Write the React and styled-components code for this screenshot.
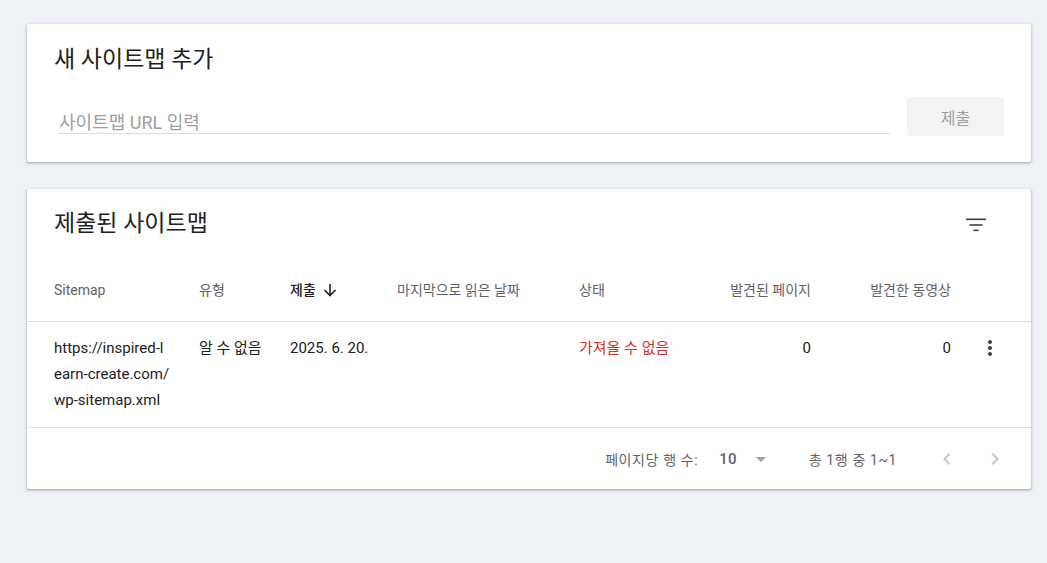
import React from 'react';
import styled, { createGlobalStyle } from 'styled-components';

const GlobalStyle = createGlobalStyle`
  html, body {
    margin: 0;
    padding: 0;
    background: #eef2f7;
    font-family: Roboto, 'Noto Sans CJK KR', sans-serif;
    color: #202124;
  }
`;

const Page = styled.div`
  padding: 24px 16px 40px 27px;
  width: 1004px;
  display: flex;
  flex-direction: column;
  gap: 27px;
`;

const Card = styled.section`
  background: #fff;
  border-radius: 2px;
  box-shadow: 0 1px 2px rgba(60, 64, 67, 0.3), 0 1px 3px 1px rgba(60, 64, 67, 0.15);
`;

const AddCard = styled(Card)`
  padding: 22px 27px 26px;
`;

const Title = styled.h2`
  margin: 0;
  font-size: 23px;
  line-height: 28px;
  font-weight: 400;
  color: #202124;
`;

const FormRow = styled.div`
  margin-top: 23px;
  display: flex;
  align-items: flex-start;
  gap: 17px;
`;

const UrlInput = styled.input`
  box-sizing: border-box;
  margin-left: 4px;
  width: 832px;
  height: 37px;
  padding: 14px 0 0 1px;
  border: none;
  border-bottom: 1px solid #dadce0;
  outline: none;
  font-family: inherit;
  font-size: 18px;
  line-height: 22px;
  color: #202124;
  &::placeholder {
    color: #9aa0a6;
  }
`;

const SubmitButton = styled.button`
  width: 97px;
  height: 39px;
  border: none;
  border-radius: 4px;
  background: #f3f3f3;
  color: #9e9e9e;
  font-family: inherit;
  font-size: 16px;
`;

const ListCard = styled(Card)`
  padding-top: 21px;
`;

const TitleRow = styled.div`
  display: flex;
  align-items: center;
  justify-content: space-between;
  padding: 0 42px 0 27px;
`;

const IconButton = styled.span`
  display: inline-flex;
  width: 24px;
  height: 24px;
  color: ${p => p.color || '#5f6368'};
`;

const columns = '145px 91px 107px 182px 92px 140px 140px 53px';

const HeadRow = styled.div`
  display: grid;
  grid-template-columns: ${columns};
  align-items: end;
  padding: 43px 27px 22px;
  border-bottom: 1px solid #dadce0;
`;

const HeadCell = styled.div`
  font-size: 14px;
  line-height: 18px;
  color: ${p => (p.active ? '#202124' : '#5f6368')};
  font-weight: ${p => (p.active ? 500 : 400)};
  display: flex;
  align-items: center;
  justify-content: ${p => (p.right ? 'flex-end' : 'flex-start')};
  gap: 7px;
`;

const DataRow = styled.div`
  display: grid;
  grid-template-columns: ${columns};
  align-items: start;
  padding: 13px 27px 14px;
  border-bottom: 1px solid #dadce0;
`;

const Cell = styled.div`
  font-size: 15px;
  line-height: 26px;
  color: ${p => p.color || '#202124'};
  text-align: ${p => (p.right ? 'right' : 'left')};
  padding-right: ${p => (p.wrap ? '29px' : '0')};
  word-break: ${p => (p.wrap ? 'break-all' : 'normal')};
  white-space: ${p => (p.wrap ? 'normal' : 'nowrap')};
`;

const MenuCell = styled.div`
  display: flex;
  justify-content: flex-end;
  padding-top: 1px;
  padding-right: 2px;
`;

const Footer = styled.div`
  height: 61px;
  display: flex;
  align-items: center;
  justify-content: flex-end;
  padding-right: 24px;
  font-size: 14px;
  letter-spacing: 0.6px;
  color: #5f6368;
`;

const RowsValue = styled.span`
  margin-left: 21px;
  font-size: 15px;
  font-weight: 500;
  letter-spacing: 0.3px;
  color: #5f6368;
`;

const DropIcon = styled.span`
  display: inline-flex;
  margin-left: 12px;
  color: #9aa0a6;
`;

const RangeText = styled.span`
  margin-left: 36px;
`;

const Pager = styled.div`
  display: flex;
  gap: 24px;
  margin-left: 38px;
  color: #c4c7c5;
`;

const Svg = ({ d, size = 24 }) => (
  <svg width={size} height={size} viewBox="0 0 24 24" fill="currentColor">
    <path d={d} />
  </svg>
);

const FilterIcon = () => (
  <svg width="24" height="24" viewBox="0 0 24 24" fill="currentColor">
    <rect x="1" y="6.5" width="20" height="1.6" />
    <rect x="4.5" y="12.2" width="13" height="1.6" />
    <rect x="8.5" y="17.6" width="5" height="1.6" />
  </svg>
);

const SortArrow = () => (
  <svg width="14" height="14" viewBox="0 0 14 14" fill="none" stroke="currentColor" strokeWidth="1.6">
    <path d="M7 1v11.5M1.5 7l5.5 5.5L12.5 7" />
  </svg>
);

const icons = {
  more: 'M12 8c1.1 0 2-.9 2-2s-.9-2-2-2-2 .9-2 2 .9 2 2 2zm0 2c-1.1 0-2 .9-2 2s.9 2 2 2 2-.9 2-2-.9-2-2-2zm0 6c-1.1 0-2 .9-2 2s.9 2 2 2 2-.9 2-2-.9-2-2-2z',
  drop: 'M7 10l5 5 5-5z',
  prev: 'M15.41 7.41L14 6l-6 6 6 6 1.41-1.41L10.83 12z',
  next: 'M10 6L8.59 7.41 13.17 12l-4.58 4.59L10 18l6-6z'
};

export default function App() {
  return (
    <>
      <GlobalStyle />
      <Page>
        <AddCard>
          <Title>새 사이트맵 추가</Title>
          <FormRow>
            <UrlInput placeholder="사이트맵 URL 입력" />
            <SubmitButton>제출</SubmitButton>
          </FormRow>
        </AddCard>

        <ListCard>
          <TitleRow>
            <Title>제출된 사이트맵</Title>
            <IconButton color="#3c4043">
              <FilterIcon />
            </IconButton>
          </TitleRow>
          <HeadRow>
            <HeadCell>Sitemap</HeadCell>
            <HeadCell>유형</HeadCell>
            <HeadCell active>
              제출 <SortArrow />
            </HeadCell>
            <HeadCell>마지막으로 읽은 날짜</HeadCell>
            <HeadCell>상태</HeadCell>
            <HeadCell right>발견된 페이지</HeadCell>
            <HeadCell right>발견한 동영상</HeadCell>
            <HeadCell />
          </HeadRow>
          <DataRow>
            <Cell wrap>https://inspired-learn-create.com/wp-sitemap.xml</Cell>
            <Cell>알 수 없음</Cell>
            <Cell>2025. 6. 20.</Cell>
            <Cell />
            <Cell color="#d93025">가져올 수 없음</Cell>
            <Cell right>0</Cell>
            <Cell right>0</Cell>
            <MenuCell>
              <IconButton color="#3c4043">
                <Svg d={icons.more} />
              </IconButton>
            </MenuCell>
          </DataRow>
          <Footer>
            <span>페이지당 행 수:</span>
            <RowsValue>10</RowsValue>
            <DropIcon>
              <Svg d={icons.drop} />
            </DropIcon>
            <RangeText>총 1행 중 1~1</RangeText>
            <Pager>
              <Svg d={icons.prev} />
              <Svg d={icons.next} />
            </Pager>
          </Footer>
        </ListCard>
      </Page>
    </>
  );
}
